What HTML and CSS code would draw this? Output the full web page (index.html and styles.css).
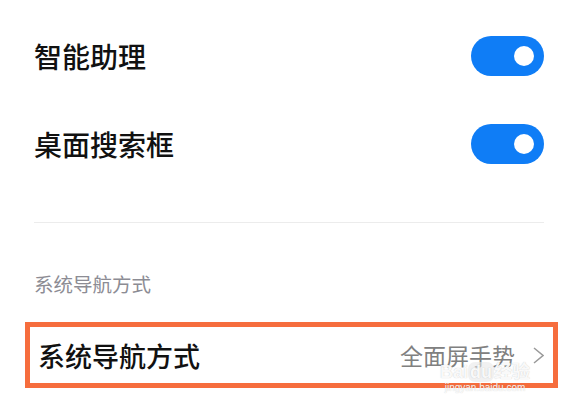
FILE: index.html
```html
<!DOCTYPE html>
<html lang="zh-CN">
<head>
<meta charset="utf-8">
<link rel="stylesheet" href="styles.css">
</head>
<body>
<div class="page">
  <div class="row">
    <span class="label">智能助理</span>
    <span class="switch"><span class="knob"></span></span>
  </div>
  <div class="row">
    <span class="label">桌面搜索框</span>
    <span class="switch"><span class="knob"></span></span>
  </div>
  <div class="divider"></div>
  <div class="section-title">系统导航方式</div>
  <div class="nav-row">
    <span class="label">系统导航方式</span>
    <span class="value">全面屏手势
      <svg class="chevron" width="11" height="17" viewBox="0 0 11 17"><path d="M1 1 L10 8.5 L1 16" fill="none" stroke="#9a9a9a" stroke-width="1.5"/></svg>
    </span>
    <div class="watermark">
      <span class="wm-logo">Bai<span class="wm-du">du</span>经验</span>
      <span class="wm-url">jingyan.baidu.com</span>
    </div>
  </div>
</div>
</body>
</html>
```

FILE: styles.css
```css
html, body {
  margin: 0;
  padding: 0;
  background: #ffffff;
}
body {
  font-family: "Noto Sans CJK SC", "Noto Sans", sans-serif;
  width: 574px;
  height: 412px;
  overflow: hidden;
}
.page {
  padding: 12px 30px 0 34px;
  display: flex;
  flex-direction: column;
}
.row {
  height: 88px;
  display: flex;
  align-items: center;
  justify-content: space-between;
}
.label {
  font-size: 28px;
  font-weight: 500;
  color: #111111;
  line-height: 1;
}
.switch {
  width: 73px;
  height: 40px;
  border-radius: 20px;
  background: #0f7df6;
  display: flex;
  align-items: center;
  justify-content: flex-end;
  padding-right: 10px;
  box-sizing: border-box;
}
.knob {
  width: 20px;
  height: 20px;
  border-radius: 50%;
  background: #ffffff;
}
.divider {
  margin-top: 34px;
  height: 1px;
  background: #ececec;
}
.section-title {
  margin-top: 47px;
  font-size: 19.5px;
  line-height: 28px;
  color: #8c8c94;
}
.nav-row {
  position: relative;
  margin: 24px -14px 0 -9px;
  height: 66px;
  box-sizing: border-box;
  border: 5px solid #f66d3d;
  display: flex;
  align-items: center;
  justify-content: space-between;
  padding: 0 9px 0 8px;
}
.nav-row .label {
  font-size: 27px;
}
.value {
  display: flex;
  align-items: center;
  gap: 18px;
  font-size: 23px;
  color: #808080;
  line-height: 1;
}
.chevron {
  display: block;
}
.watermark {
  position: absolute;
  left: 410px;
  top: 35px;
  display: flex;
  flex-direction: column;
  align-items: center;
  pointer-events: none;
}
.wm-logo {
  font-family: "Liberation Sans", "Noto Sans CJK SC", sans-serif;
  font-size: 18px;
  font-weight: 700;
  line-height: 20px;
  color: rgba(255,255,255,0.92);
  text-shadow: 0 0 1px rgba(120,120,120,0.45);
}
.wm-du {
  background: rgba(232,232,232,0.6);
  border-radius: 7px;
  padding: 0 2px;
}
.wm-url {
  font-family: "Liberation Sans", sans-serif;
  font-size: 10px;
  line-height: 12px;
  color: rgba(255,255,255,0.92);
  text-shadow: 0 0 1px rgba(120,120,120,0.4);
}
```
